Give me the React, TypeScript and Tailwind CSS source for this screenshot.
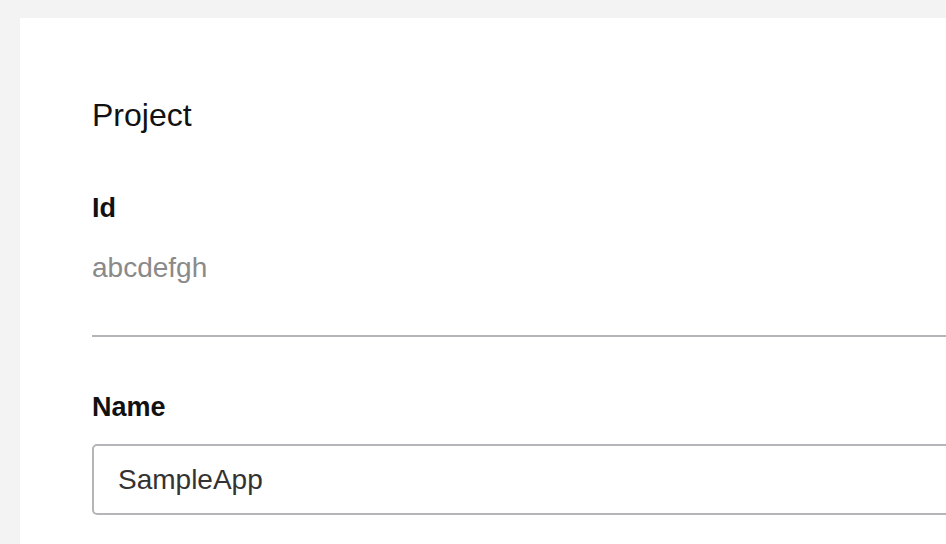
import React from 'react';

const font = { fontFamily: '"Liberation Sans", Arial, sans-serif' };

export default function App() {
  return (
    <div className="w-[946px] h-[544px] overflow-hidden bg-[#f3f3f3] pt-[18px] pl-[20px]" style={font}>
      <div className="w-[1200px] h-[600px] bg-white pl-[72px] pr-[72px] pt-[79px]">
        <h1 className="text-[32px] leading-[36px] font-normal text-[#111]">Project</h1>

        <div className="mt-[59px]">
          <div className="text-[27px] leading-[32px] font-bold text-[#111]">Id</div>
          <div className="mt-[28px] text-[28px] leading-[32px] text-[#8a8a8a]">abcdefgh</div>
        </div>

        <div className="mt-[51px] h-[2px] bg-[#b5b5b9]" />

        <div className="mt-[54px]">
          <label className="block text-[27px] leading-[32px] font-bold text-[#111]">Name</label>
          <input
            className="mt-[21px] block w-full h-[71px] rounded-[5px] border-2 border-[#b5b5b9] px-[24px] text-[28px] text-[#333] outline-none"
            style={font}
            defaultValue="SampleApp"
          />
        </div>
      </div>
    </div>
  );
}
